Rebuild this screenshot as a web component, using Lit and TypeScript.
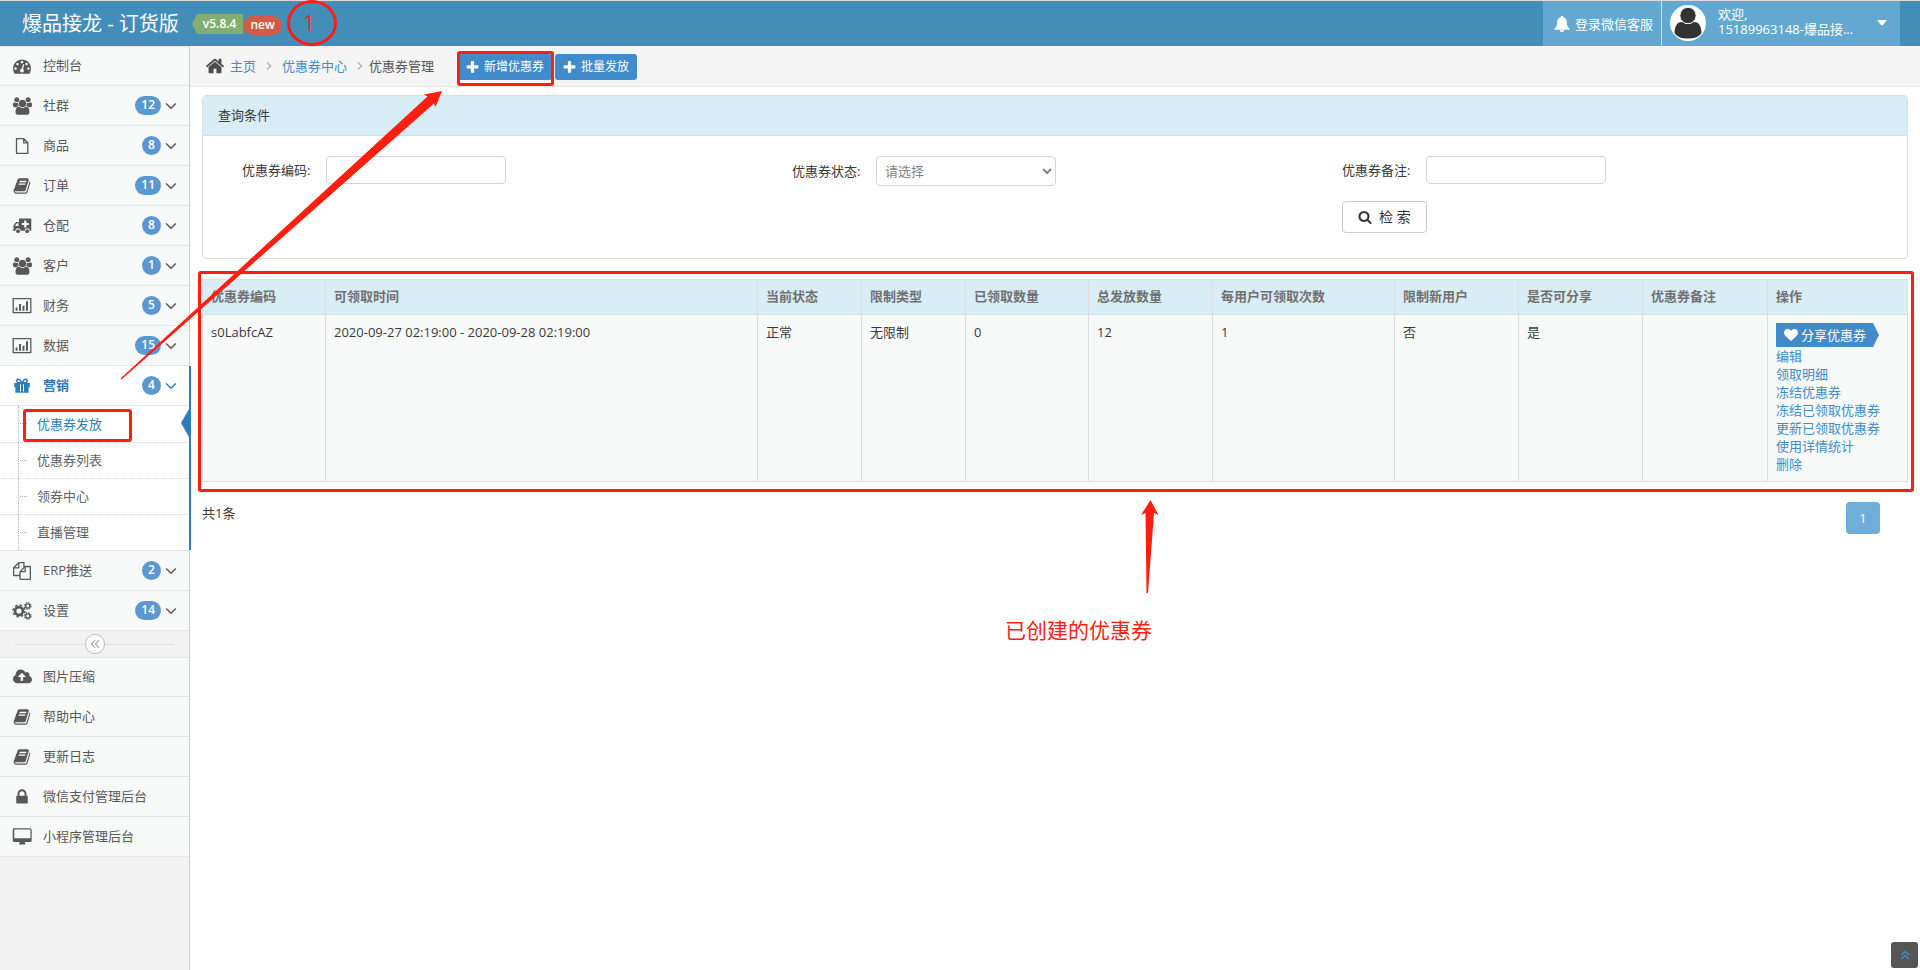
import { LitElement, html, svg, css, nothing } from "lit";
import { customElement, property } from "lit/decorators.js";
import { classMap } from "lit/directives/class-map.js";

const glyph = (w: number, d: string) => ({ w, h: 1792, body: svg`<path d=${d}></path>` });

const ICONS: Record<string, { w: number; h: number; body: unknown }> = {
  dashboard: glyph(1792, "M384 1152q0-53-37.5-90.5t-90.5-37.5-90.5 37.5-37.5 90.5 37.5 90.5 90.5 37.5 90.5-37.5 37.5-90.5zm192-448q0-53-37.5-90.5t-90.5-37.5-90.5 37.5-37.5 90.5 37.5 90.5 90.5 37.5 90.5-37.5 37.5-90.5zm428 481l101-382q6-26-7.5-48.5t-38.5-29.5-48 6.5-30 39.5l-101 382q-60 5-107 43.5t-63 98.5q-20 77 20 146t117 89 146-20 89-117q16-60-6-117t-72-91zm660-33q0-53-37.5-90.5t-90.5-37.5-90.5 37.5-37.5 90.5 37.5 90.5 90.5 37.5 90.5-37.5 37.5-90.5zm-640-640q0-53-37.5-90.5t-90.5-37.5-90.5 37.5-37.5 90.5 37.5 90.5 90.5 37.5 90.5-37.5 37.5-90.5zm448 192q0-53-37.5-90.5t-90.5-37.5-90.5 37.5-37.5 90.5 37.5 90.5 90.5 37.5 90.5-37.5 37.5-90.5zm320 448q0 261-141 483-19 29-54 29h-1402q-35 0-54-29-141-221-141-483 0-182 71-348t191-286 286-191 348-71 348 71 286 191 191 286 71 348z"),
  users: glyph(1920, "M593 896q-162 5-265 128h-134q-82 0-138-40.5t-56-118.5q0-353 124-353 6 0 43.5 21t97.5 42.5 119 21.5q67 0 133-23-5 37-5 66 0 139 81 256zm1071 637q0 120-73 189.5t-194 69.5h-874q-121 0-194-69.5t-73-189.5q0-53 3.5-103.5t14-109 26.5-108.5 43-97.5 62-81 85.5-53.5 111.5-20q10 0 43 21.5t73 48 107 48 135 21.5 135-21.5 107-48 73-48 43-21.5q61 0 111.5 20t85.5 53.5 62 81 43 97.5 26.5 108.5 14 109 3.5 103.5zm-1024-1277q0 106-75 181t-181 75-181-75-75-181 75-181 181-75 181 75 75 181zm704 384q0 159-112.5 271.5t-271.5 112.5-271.5-112.5-112.5-271.5 112.5-271.5 271.5-112.5 271.5 112.5 112.5 271.5zm576 225q0 78-56 118.5t-138 40.5h-134q-103-123-265-128 81-117 81-256 0-29-5-66 66 23 133 23 59 0 119-21.5t97.5-42.5 43.5-21q124 0 124 353zm-128-609q0 106-75 181t-181 75-181-75-75-181 75-181 181-75 181 75 75 181z"),
  file: { w: 18, h: 18, body: svg`<path d="M3.5 1.7h7.3l4 4v10.6H3.5zM10.7 1.7v4.2h4.1" fill="none" stroke="currentColor" stroke-width="1.3" stroke-linejoin="round"></path>` },
  book: glyph(1792, "M1703 478q40 57 18 129l-275 906q-19 64-76.5 107.5t-122.5 43.5h-923q-77 0-148.5-53.5t-99.5-131.5q-24-67-2-127 0-4 3-27t4-37q1-8-3-21.5t-3-19.5q2-11 8-21t16.5-23.5 16.5-23.5q23-38 45-91.5t30-91.5q3-10 .5-30t-.5-28q3-11 17-28t17-23q21-36 42-92t25-90q1-9-2.5-32t.5-28q4-13 22-30.5t22-22.5q19-26 42.5-84.5t27.5-96.5q1-8-3-25.5t-2-26.5q2-8 9-18t18-23 17-21q8-12 16.5-30.5t15-35 16-36 19.5-32 26.5-23.5 36-11.5 47.5 5.5l-1 3q38-9 51-9h761q74 0 114 56t18 130l-274 906q-36 119-71.5 153.5t-128.5 34.5h-869q-27 0-38 15-11 16-1 43 24 70 144 70h923q29 0 56-15.5t35-41.5l300-987q7-22 5-57 38 15 59 43zm-1064 2q-4 13 2 22.5t20 9.5h608q13 0 25.5-9.5t16.5-22.5l21-64q4-13-2-22.5t-20-9.5h-608q-13 0-25.5 9.5t-16.5 22.5zm-83 256q-4 13 2 22.5t20 9.5h608q13 0 25.5-9.5t16.5-22.5l21-64q4-13-2-22.5t-20-9.5h-608q-13 0-25.5 9.5t-16.5 22.5z"),
  ambulance: { w: 20, h: 18, body: svg`<path fill-rule="evenodd" d="M7 1.5h12.3v12.3h-1.6a2.5 2.5 0 0 0-5 0H8.5a2.5 2.5 0 0 0-5 0H.7v-1h.8V8.300L4.200 5H7zM5 6.300 2.800 9h3.600V6.300zM12.200 3.500v2.400H9.800v2.200H12.200v2.400h2.200V8.100h2.400V5.900h-2.400V3.500z"></path><circle cx="6" cy="14.200" r="1.900"></circle><circle cx="15.200" cy="14.200" r="1.900"></circle>` },
  chart: { w: 20, h: 18, body: svg`<path d="M1.200 1.700h17.600v14H1.200z" fill="none" stroke="currentColor" stroke-width="1.300" stroke-linejoin="round"></path><path d="M3.600 10.500h2v3.200h-2zM7 7h2v6.700H7zM10.500 8.700h2v5h-2zM14 4.200h2v9.500h-2z"></path>` },
  gift: { w: 18, h: 18, body: svg`<path fill-rule="evenodd" d="M1.200 6h15.600v4.200h-1.200v5.600H2.400v-5.600H1.200zM7 7.200v7.300h1V7.200zm3 0v7.300h1V7.200z"></path><path d="M8.800 6C7.500 2.600 6 2 4.900 2.200 3 2.800 3.500 5.600 5.500 5.700zM9.200 6c1.300-3.400 2.800-4 3.900-3.800 1.900.6 1.400 3.400-.6 3.500z" fill="none" stroke="currentColor" stroke-width="1.500"></path>` },
  files: glyph(1792, "M1696 384q40 0 68 28t28 68v1216q0 40-28 68t-68 28h-960q-40 0-68-28t-28-68v-288h-544q-40 0-68-28t-28-68v-672q0-40 20-88t48-76l408-408q28-28 76-48t88-20h416q40 0 68 28t28 68v328q68-40 128-40h416zm-544 213l-299 299h299v-299zm-640-384l-299 299h299v-299zm196 647l316-316v-416h-384v416q0 40-28 68t-68 28h-416v640h512v-256q0-40 20-88t48-76zm956 804v-1152h-384v416q0 40-28 68t-68 28h-416v640h896z"),
  cogs: { w: 20, h: 18, body: svg`<g fill="none" stroke="currentColor"><circle cx="7" cy="9" r="3.900" stroke-width="2.600"></circle><circle cx="7" cy="9" r="5.800" stroke-width="1.800" stroke-dasharray="2.300 2.255"></circle><circle cx="15.800" cy="4" r="2.100" stroke-width="1.400"></circle><circle cx="15.800" cy="4" r="3.200" stroke-width="1.200" stroke-dasharray="1.500 1.013"></circle><circle cx="15.800" cy="14" r="2.100" stroke-width="1.400"></circle><circle cx="15.800" cy="14" r="3.200" stroke-width="1.200" stroke-dasharray="1.500 1.013"></circle></g>` },
  cloud: glyph(1920, "M1280 864q0-14-9-23l-352-352q-9-9-23-9t-23 9l-351 351q-10 12-10 24 0 14 9 23t23 9h224v352q0 13 9.500 22.500t22.500 9.500h192q13 0 22.500-9.500t9.500-22.500v-352h224q13 0 22.500-9.500t9.500-22.500zm640 288q0 159-112.500 271.500t-271.500 112.500h-1088q-185 0-316.500-131.500t-131.500-316.500q0-130 70-240t188-165q-2-30-2-43 0-212 150-362t362-150q156 0 285.500 87t188.500 231q71-62 166-62 106 0 181 75t75 181q0 76-41 138 130 31 213.500 135.500t83.500 238.500z"),
  lock: glyph(1792, "M640 768h512v-192q0-106-75-181t-181-75-181 75-75 181v192zm832 96v576q0 40-28 68t-68 28h-960q-40 0-68-28t-28-68v-576q0-40 28-68t68-28h32v-192q0-184 132-316t316-132 316 132 132 316v192h32q40 0 68 28t28 68z"),
  desktop: glyph(1920, "M1760 992v-832q0-13-9.500-22.500t-22.500-9.500h-1568q-13 0-22.500 9.500t-9.500 22.500v832q0 13 9.500 22.500t22.500 9.500h1568q13 0 22.500-9.500t9.500-22.500zm128-832v1088q0 66-47 113t-113 47h-544q0 37 16 77.500t32 71 16 43.500q0 26-19 45t-45 19h-512q-26 0-45-19t-19-45q0-14 16-44t32-70 16-78h-544q-66 0-113-47t-47-113v-1088q0-66 47-113t113-47h1568q66 0 113 47t47 113z"),
  home: glyph(1792, "M1472 992v480q0 26-19 45t-45 19h-384v-384h-256v384h-384q-26 0-45-19t-19-45v-480q0-1 .5-3t.5-3l575-474 575 474q1 2 1 6zm223-69l-62 74q-8 9-21 11h-3q-13 0-21-7l-692-577-692 577q-12 8-24 7-13-2-21-11l-62-74q-8-10-7-23.500t11-21.500l719-599q32-26 76-26t76 26l244 204v-195q0-14 9-23t23-9h192q14 0 23 9t9 23v408l219 182q10 8 11 21.500t-7 23.500z"),
  search: glyph(1792, "M1216 832q0-185-131.500-316.500t-316.500-131.500-316.500 131.500-131.500 316.500 131.500 316.500 316.500 131.500 316.500-131.500 131.500-316.500zm512 832q0 52-38 90t-90 38q-54 0-90-38l-343-342q-179 124-399 124-143 0-273.500-55.500t-225-150-150-225-55.500-273.500 55.500-273.500 150-225 225-150 273.500-55.500 273.500 55.500 225 150 150 225 55.500 273.500q0 220-124 399l343 343q37 37 37 90z"),
  plus: glyph(1792, "M1600 736v192q0 40-28 68t-68 28h-416v416q0 40-28 68t-68 28h-192q-40 0-68-28t-28-68v-416h-416q-40 0-68-28t-28-68v-192q0-40 28-68t68-28h416v-416q0-40 28-68t68-28h192q40 0 68 28t28 68v416h416q40 0 68 28t28 68z"),
  heart: glyph(1792, "M896 1664q-26 0-44-18l-624-602q-10-8-27.500-26t-55.500-65.500-68-97.500-53.500-121-23.500-138q0-220 127-344t351-124q62 0 126.500 21.500t120 58 95.500 68.500 76 68q36-36 76-68t95.500-68.500 120-58 126.500-21.500q224 0 351 124t127 344q0 221-229 450l-623 600q-18 18-44 18z"),
  bell: { w: 16, h: 16, body: svg`<path d="M8 0c.9 0 1.300.5 1.300 1.300C11.800 2 12.900 4 12.900 6.400c0 3.300 1 4.900 2.700 6.200v1.200H.4v-1.200c1.700-1.300 2.700-2.900 2.700-6.200C3.100 4 4.200 2 6.700 1.300 6.700.5 7.100 0 8 0zM5.900 14.300h4.200a2.100 1.900 0 0 1-4.200 0z"></path>` },
  down: { w: 12, h: 8, body: svg`<path d="M1.200 1.500 6 6.300l4.800-4.800" fill="none" stroke="currentColor" stroke-width="1.500"></path>` },
  right: { w: 6, h: 10, body: svg`<path d="M1 1.500 4.600 5 1 8.500" fill="none" stroke="currentColor" stroke-width="1.500"></path>` },
  caret: { w: 10, h: 6, body: svg`<path d="M0 0h10L5.800 5.200H4.200z"></path>` },
  fold: { w: 10, h: 10, body: svg`<path d="M5 1.200 1.300 5 5 8.800M9 1.200 5.300 5 9 8.800" fill="none" stroke="currentColor" stroke-width="1.200"></path>` },
  top: { w: 10, h: 10, body: svg`<path d="M1.200 5 5 1.500 8.800 5M1.200 9 5 5.500 8.800 9" fill="none" stroke="currentColor" stroke-width="1.500"></path>` },
};

@customElement("ui-icon")
class UiIcon extends LitElement {
  @property() name = "";
  @property({ type: Number }) size = 18;
  static styles = css`
    :host { display: inline-flex; flex: none; }
    svg { display: block; fill: currentColor; overflow: visible; }
  `;
  render() {
    const i = ICONS[this.name];
    if (!i) return nothing;
    return html`<svg aria-hidden="true" height=${this.size} width=${Math.round((this.size * i.w) / i.h)} viewBox="0 0 ${i.w} ${i.h}">${i.body}</svg>`;
  }
}

interface Item { icon: string; text: string; count?: number; children?: string[]; }

const MENU: Item[] = [
  { icon: "dashboard", text: "控制台" },
  { icon: "users", text: "社群", count: 12 },
  { icon: "file", text: "商品", count: 8 },
  { icon: "book", text: "订单", count: 11 },
  { icon: "ambulance", text: "仓配", count: 8 },
  { icon: "users", text: "客户", count: 1 },
  { icon: "chart", text: "财务", count: 5 },
  { icon: "chart", text: "数据", count: 15 },
  { icon: "gift", text: "营销", count: 4, children: ["优惠券发放", "优惠券列表", "领券中心", "直播管理"] },
  { icon: "files", text: "ERP推送", count: 2 },
  { icon: "cogs", text: "设置", count: 14 },
];
const TOOLS: Item[] = [
  { icon: "cloud", text: "图片压缩" },
  { icon: "book", text: "帮助中心" },
  { icon: "book", text: "更新日志" },
  { icon: "lock", text: "微信支付管理后台" },
  { icon: "desktop", text: "小程序管理后台" },
];
const HEADS = ["优惠券编码", "可领取时间", "当前状态", "限制类型", "已领取数量", "总发放数量", "每用户可领取次数", "限制新用户", "是否可分享", "优惠券备注", "操作"];
const ROW = ["s0LabfcAZ", "2020-09-27 02:19:00 - 2020-09-28 02:19:00", "正常", "无限制", "0", "12", "1", "否", "是", ""];
const ACTIONS = ["编辑", "领取明细", "冻结优惠券", "冻结已领取优惠券", "更新已领取优惠券", "使用详情统计", "删除"];

@customElement("app-root")
class AppRoot extends LitElement {
  static styles = css`
    :host {
      display: flex; flex-direction: column; position: relative; min-height: 100vh;
      box-sizing: border-box; border-top: 1px solid #ddd; background: #fff; color: #393939;
      font: 13px/18px "Open Sans", "Noto Sans CJK SC", sans-serif;
    }
    *, *::before, *::after { box-sizing: border-box; }
    a { color: #428bca; text-decoration: none; }
    ul { list-style: none; margin: 0; padding: 0; }
    button, input, select { font: inherit; }

    .top { display: flex; height: 45px; background: #438eb9; color: #fff; }
    .brand { display: flex; align-items: center; padding-left: 22px; color: #fff; font-size: 20px; line-height: 24px; }
    .version { margin-left: 18px; padding: 0 7px 0 6px; height: 20px; line-height: 20px; font-size: 12px; font-weight: 600; background: #82af6f; position: relative; }
    .version::before { content: ""; position: absolute; right: 100%; top: 0; border: solid transparent; border-width: 10px 5px 10px 0; border-right-color: #82af6f; }
    .new { height: 19px; line-height: 18px; margin-top: 3px; padding: 0 7px; border-radius: 10px; font-size: 12px; font-weight: 600; background: #d15b47; }
    .userbar { display: flex; margin: 0 20px 0 auto; background: #62a8d1; }
    .userbar a, .userbar button { display: flex; align-items: center; color: #fff; border: 0; background: none; }
    .service { gap: 5px; padding: 0 8px 0 11px; }
    .userbar .account { border-left: 1px solid #ddd; padding: 0 13px 2px 8px; width: 239px; gap: 12px; text-align: left; line-height: 15px; }
    .who { flex: 1; padding-bottom: 2px; }
    .who span { display: block; }

    .body { display: flex; flex: 1; }
    .side { width: 190px; flex: none; background: #f2f2f2; border-right: 1px solid #ccc; }
    .menu { border-top: 1px solid #e5e5e5; }
    .menu a { display: flex; align-items: center; height: 39px; padding: 0 12px 0 7px; color: #585858; background: #f8faf9; }
    .menu > li { border-bottom: 1px solid #e5e5e5; }
    .menu > li:first-child a { height: 38px; }
    .menu ui-icon:first-child { width: 30px; justify-content: center; }
    .label { flex: 1; padding: 0 0 2px 6px; }
    .badge { min-width: 19px; height: 19px; padding: 0 6px; border-radius: 10px; background: #5b98d1; color: #fff; font-size: 12px; font-weight: 600; line-height: 18px; text-align: center; margin-right: 4px; }
    .menu li.open { position: relative; }
    .menu li.open > a { background: #fff; color: #2b7dbc; font-weight: 600; border-bottom: 1px solid #e5e5e5; height: 40px; }
    .menu li.open::after { content: ""; position: absolute; top: 0; bottom: 0; right: -2px; width: 2px; background: #2b7dbc; }
    .menu .sub { position: relative; background: #fff; }
    .sub::before { content: ""; position: absolute; left: 18px; top: 0; bottom: 0; border-left: 1px dotted #9dbdd6; z-index: 1; }
    .sub li { position: relative; }
    .sub li + li { border-top: 1px dotted #ddd; }
    .menu .sub li a { height: 36px; padding-left: 37px; background: none; color: #616161; }
    .menu .sub li + li a { height: 35px; padding-bottom: 2px; }
    .sub li::before { content: ""; position: absolute; left: 20px; width: 7px; top: 17px; border-top: 1px dotted #9dbdd6; }
    .menu .sub li.current a { color: #2b7dbc; }
    .sub li.current .notch { position: absolute; right: 0; top: 3px; border: solid transparent; border-width: 14px 8px 14px 0; border-right-color: #2b7dbc; }
    .mark::after { content: ""; position: absolute; border: 3px solid #ff1e10; border-radius: 3px; pointer-events: none; z-index: 2; }
    .sub li.mark::after { left: 23px; width: 109px; top: 3px; bottom: 0; }
    .fold { display: flex; align-items: center; height: 26px; padding: 0 15px; }
    .fold::before, .fold::after { content: ""; flex: 1; border-top: 1px solid #e0e0e0; }
    .fold button { display: flex; align-items: center; justify-content: center; width: 20px; height: 20px; padding: 0; border: 1px solid #bbb; border-radius: 50%; background: #fff; color: #aaa; }

    .main { flex: 1; min-width: 0; }
    .crumbs { display: flex; align-items: center; height: 41px; padding-left: 15px; background: #f5f5f5; border-bottom: 1px solid #e5e5e5; color: #555; }
    .crumbs ui-icon.home { color: #4c4c4c; margin-right: 5px; }
    .crumbs ui-icon.sep { color: #b2b6bf; margin: 0 10px; }
    .crumbs ui-icon.last { margin-right: 6px; }
    .btns { display: flex; gap: 3px; margin-left: 24px; padding-top: 2px; }
    .btns button { display: flex; align-items: center; gap: 4px; position: relative; height: 26px; padding: 0 8px 0 7px; border: 0; border-radius: 3px; background: #428bca; color: #fff; font-size: 12px; }
    .btns .mark::after { inset: -3px -2px -6px -1px; }

    .content { padding: 8px 12px; }
    .panel { border: 1px solid #ddd; border-radius: 4px; overflow: hidden; }
    .panel h2 { margin: 0; padding: 10px 15px; font: inherit; line-height: 19px; background: #d9edf7; border-bottom: 1px solid #ddd; }
    .filters { display: grid; grid-template-columns: repeat(3, 1fr); align-items: start; row-gap: 15px; padding: 20px 27px 25px; }
    .field { display: flex; align-items: center; gap: 14px; padding-left: 12px; }
    .field label { width: 70px; white-space: nowrap; }
    .field input, .field select { width: 180px; height: 28px; padding: 0 8px; border: 1px solid #d5d5d5; border-radius: 4px; background: #fff; color: #858585; }
    .field select { height: 30px; padding: 0 4px; }
    .field .search { display: flex; align-items: center; gap: 7px; height: 32px; padding: 0 15px; border: 1px solid #ccc; border-radius: 4px; background: #fff; color: #333; font-size: 14px; }
    .third { grid-column: 3; }

    .tablebox { position: relative; margin-top: 20px; }
    .tablebox.mark::after { inset: -8px -6px -10px -4px; }
    table { width: 100%; border-collapse: collapse; table-layout: fixed; }
    th, td { padding: 8px; border: 1px solid #ddd; text-align: left; vertical-align: top; }
    th { padding: 7px 8px 9px; background: #d9edf7; color: #707070; font-weight: 700; }
    td { background: #f8faf9; }
    .w104 { width: 104px; } .w123 { width: 123px; } .w124 { width: 124px; } .w125 { width: 125px; } .w182 { width: 182px; } .w140 { width: 140px; }
    td a { display: block; white-space: nowrap; }
    td .share { display: flex; align-items: center; gap: 3px; width: 103px; height: 24px; padding: 0 8px 1px; background: #428bca; color: #fff; clip-path: polygon(0 0, 97px 0, 100% 50%, 97px 100%, 0 100%); }

    .foot { display: flex; justify-content: space-between; padding: 20px 28px 0 0; }
    .foot p { margin: 0; padding-top: 2px; }
    .page { display: flex; align-items: center; justify-content: center; width: 34px; height: 32px; border-radius: 4px; background: #6faed9; color: #fff; }
    .totop { position: fixed; right: 2px; bottom: 2px; width: 27px; height: 26px; display: flex; align-items: center; justify-content: center; border-radius: 3px; background: #555; }
    .ink { position: absolute; left: 0; top: -1px; width: 1200px; height: 660px; pointer-events: none; z-index: 3; fill: #ff1e10; font-size: 21px; overflow: visible; }
  `;

  private menuItem(m: Item) {
    return html`<li class=${classMap({ open: !!m.children })}>
      <a href="#"><ui-icon name=${m.icon}></ui-icon><span class="label">${m.text}</span>
        ${m.count ? html`<span class="badge">${m.count}</span><ui-icon name="down" size="8"></ui-icon>` : nothing}</a>
      ${m.children
        ? html`<ul class="sub">${m.children.map((c, i) => html`<li class=${classMap({ current: i === 0, mark: i === 0 })}>
            <a href="#">${c}</a>${i === 0 ? html`<i class="notch"></i>` : nothing}</li>`)}</ul>`
        : nothing}
    </li>`;
  }

  render() {
    return html`
      <header class="top">
        <a class="brand" href="#">爆品接龙 - 订货版<span class="version">v5.8.4</span><span class="new">new</span></a>
        <div class="userbar">
          <a class="service" href="#"><ui-icon name="bell" size="16"></ui-icon>登录微信客服</a>
          <button class="account">
            <svg width="36" height="36" viewBox="0 0 36 36" aria-hidden="true"><circle cx="18" cy="18" r="18" fill="#fff"></circle><path d="M9 17.500c2-1 4-.7 5.500.2 2.300 1.500 4.700 1.500 7 0 1.500-.9 3.500-1.200 5.500-.2C30.500 19.500 31.500 24 31.500 28c-3 4.500-8 5.500-13.500 5.500S7.500 32.500 4.500 28c0-4 1-8.500 4.500-10.500z" fill="#333"></path><circle cx="18" cy="10.500" r="8.200" fill="#333" stroke="#fff"></circle></svg>
            <span class="who"><span>欢迎,</span><span>15189963148-爆品接...</span></span>
            <ui-icon name="caret" size="6"></ui-icon>
          </button>
        </div>
      </header>
      <div class="body">
        <nav class="side">
          <ul class="menu">${MENU.map((m) => this.menuItem(m))}</ul>
          <div class="fold"><button aria-label="收起"><ui-icon name="fold" size="10"></ui-icon></button></div>
          <ul class="menu">${TOOLS.map((m) => this.menuItem(m))}</ul>
        </nav>
        <main class="main">
          <div class="crumbs">
            <ui-icon class="home" name="home" size="20"></ui-icon><a href="#">主页</a>
            <ui-icon class="sep" name="right" size="10"></ui-icon><a href="#">优惠券中心</a>
            <ui-icon class="sep last" name="right" size="10"></ui-icon><span>优惠券管理</span>
            <div class="btns">
              <button class="mark"><ui-icon name="plus" size="15"></ui-icon>新增优惠券</button>
              <button><ui-icon name="plus" size="15"></ui-icon>批量发放</button>
            </div>
          </div>
          <div class="content">
            <section class="panel">
              <h2>查询条件</h2>
              <form class="filters" @submit=${(e: Event) => e.preventDefault()}>
                <div class="field"><label for="code">优惠券编码:</label><input id="code" type="text" /></div>
                <div class="field"><label for="state">优惠券状态:</label><select id="state"><option>请选择</option></select></div>
                <div class="field"><label for="note">优惠券备注:</label><input id="note" type="text" /></div>
                <div class="field third"><button class="search"><ui-icon name="search" size="14"></ui-icon>检 索</button></div>
              </form>
            </section>
            <div class="tablebox mark">
              <table>
                <colgroup>
                  <col class="w123" /><col /><col class="w104" /><col class="w104" /><col class="w123" /><col class="w124" />
                  <col class="w182" /><col class="w124" /><col class="w124" /><col class="w125" /><col class="w140" />
                </colgroup>
                <thead><tr>${HEADS.map((h) => html`<th>${h}</th>`)}</tr></thead>
                <tbody><tr>${ROW.map((c) => html`<td>${c}</td>`)}
                  <td><a class="share" href="#"><ui-icon name="heart" size="14"></ui-icon>分享优惠券</a>${ACTIONS.map((a) => html`<a href="#">${a}</a>`)}</td></tr></tbody>
              </table>
            </div>
            <div class="foot"><p>共1条</p><a class="page" href="#">1</a></div>
          </div>
        </main>
      </div>
      <a class="totop" href="#" aria-label="返回顶部"><ui-icon name="top" size="10"></ui-icon></a>
      <svg class="ink" viewBox="0 0 1200 660">
        <ellipse cx="312" cy="23" rx="23.500" ry="21.500" fill="none" stroke="#ff1e10" stroke-width="3"></ellipse>
        <text x="303" y="31">1</text>
        <path d="M442 91 435.500 107 434 103.500 121.500 379.500 120.500 378.500 427.500 96.500 424 94.500z"></path>
        <path d="M1150.500 500 1158.500 515 1154 513 1148 593h-1.500L1145.500 513l-4.500 2z"></path>
        <text x="1005" y="638">已创建的优惠券</text>
      </svg>
    `;
  }
}
